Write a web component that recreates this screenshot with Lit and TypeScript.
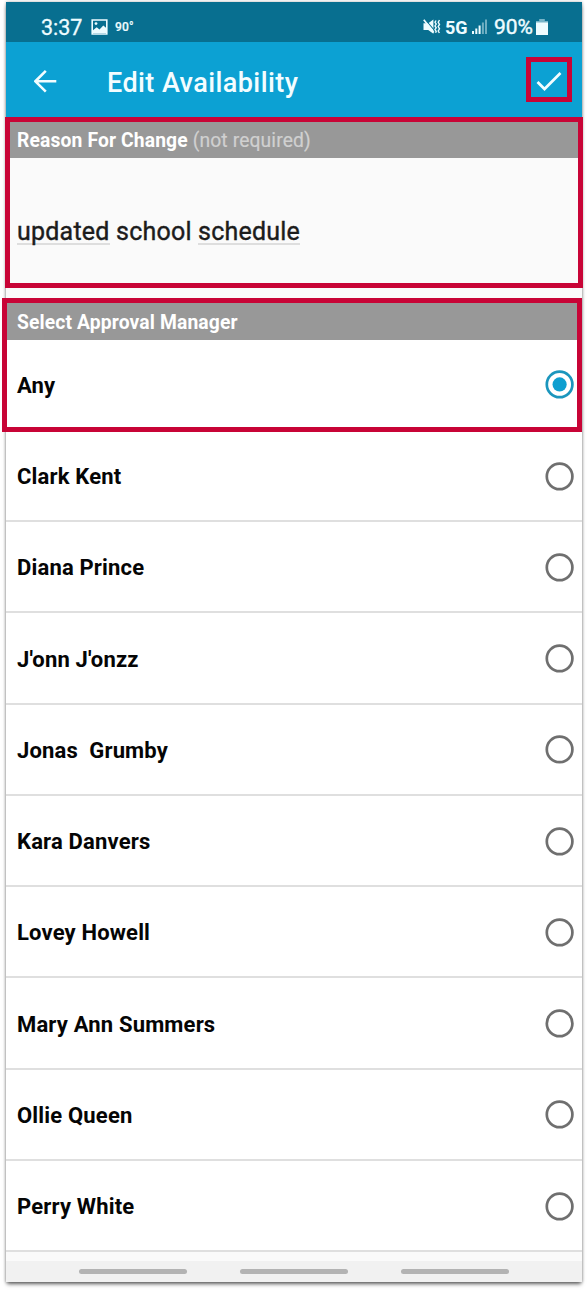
import { LitElement, html, css, svg } from "lit";
import { customElement, property } from "lit/decorators.js";

@customElement("radio-mark")
class RadioMark extends LitElement {
  @property({ type: Boolean }) checked = false;
  static styles = css`
    :host { display: block; width: 30px; height: 30px; }
    svg { display: block; }
    .ring { fill: none; stroke: #6f6f6f; stroke-width: 2.7; }
    .ring.on { stroke: #1b96bd; }
    .dot { fill: #0e9fd0; }
  `;
  render() {
    return html`<svg width="30" height="30" viewBox="0 0 30 30">
      <circle class="ring ${this.checked ? "on" : ""}" cx="14.6" cy="14.4" r="12.8"></circle>
      ${this.checked ? svg`<circle class="dot" cx="14.6" cy="14.4" r="7.1"></circle>` : null}
    </svg>`;
  }
}

@customElement("app-root")
class AppRoot extends LitElement {
  static styles = css`
    :host { display: block; width: 588px; height: 1292px; background: #fff; overflow: hidden;
      font-family: Roboto, sans-serif; box-sizing: border-box; padding: 2px 6px 0; }
    svg { display: block; flex: none; }
    .phone { position: relative; width: 576px; height: 1280px; display: flex; flex-direction: column;
      background: #fafafa; box-shadow: 0 3px 4px -1px rgba(0,0,0,.6), 0 0 3px rgba(0,0,0,.3); }
    .status { height: 40px; flex: none; box-sizing: border-box; background: #086f90; color: #eefcff;
      display: flex; align-items: center; padding: 10px 34px 0 35px; }
    .time { font-size: 21.5px; width: 50px; -webkit-text-stroke: .3px; }
    .temp { font-size: 12px; font-weight: 500; margin-left: 7px; letter-spacing: .2px; -webkit-text-stroke: .2px; }
    .spacer { flex: 1; }
    .net { font-size: 18px; font-weight: 700; margin-left: 4px; width: 27px; }
    .pct { font-size: 21px; width: 42px; margin-left: 7px; -webkit-text-stroke: .4px; }
    .bar { height: 78px; flex: none; background: #0ca1d3; color: #f3fdff; display: flex; align-items: center;
      padding: 0 19px 0 28px; box-sizing: border-box; }
    .title { font-size: 27px; font-weight: 500; margin-left: 49px; line-height: 32px; padding-top: 3px;
      letter-spacing: .42px; }
    .head { height: 38px; flex: none; background: #989898; color: #fff; font-size: 19.3px; font-weight: 700;
      display: flex; align-items: center; padding: 3px 11px 0; box-sizing: border-box; white-space: pre;
      letter-spacing: .13px; }
    .head .opt { font-weight: 400; color: #d0d0d0; -webkit-text-stroke: .2px; }
    .note { height: 143.6px; flex: none; box-sizing: border-box; padding: 59px 11px 0; color: #1c1c1c;
      font-size: 25px; line-height: 30px; white-space: pre; letter-spacing: .22px; -webkit-text-stroke: .4px; }
    .word { display: inline-block; height: 26px; border-bottom: 2.5px solid #dedede; }
    .list { flex: none; background: #fff; }
    .row { height: 91.25px; box-sizing: border-box; border-bottom: 2px solid #dfdfdf; display: flex;
      align-items: center; justify-content: space-between; padding: 2.4px 7.5px 0 11px; color: #050505;
      font-size: 22px; font-weight: 700; white-space: pre; letter-spacing: .17px; }
    .row:first-child { border-color: transparent; }
    .nav { height: 21px; margin-top: auto; background: #f1f1f1; display: flex; justify-content: center;
      align-items: center; gap: 53px; }
    .pill { width: 108px; height: 5px; border-radius: 3px; background: #b3b3b3; }
    .mark { position: absolute; box-sizing: border-box; border: 5px solid #c80436; pointer-events: none; }
    .m-check { left: 520px; top: 55px; width: 46px; height: 45px; }
    .m-reason { left: -1px; top: 115px; width: 578px; height: 171px; }
    .m-manager { left: -4px; top: 296px; width: 580px; height: 134px; }
  `;
  names = ["Any", "Clark Kent", "Diana Prince", "J'onn J'onzz", "Jonas  Grumby", "Kara Danvers",
    "Lovey Howell", "Mary Ann Summers", "Ollie Queen", "Perry White"];
  render() {
    return html`<div class="phone">
      <div class="status">
        <span class="time">3:37</span>
        <svg width="17" height="16" viewBox="0 0 17 16"><path fill="none" stroke="#eefcff" stroke-width="1.6" d="M1.2 1h14.6v14H1.2z"/><path fill="#eefcff" d="M2 11.2l3.7-3 2.8 2.2 3.8-3.8L15 8.8V14H2z"/><circle cx="5" cy="4.6" r="1.4" fill="#eefcff"/></svg>
        <span class="temp">90°</span>
        <span class="spacer"></span>
        <svg width="18" height="16" viewBox="0 0 18 16"><path fill="#eefcff" d="M.5 4.2h4.8L10.4 .6V14.8L5.2 11H.5z"/><path d="M1.8 .2L12 12" stroke="#086f90" stroke-width="1.1"/><path d="M.8 .8L10.8 13.6" stroke="#eefcff" stroke-width="1.7"/><path d="M13 1.5l-1 1.8 1.2 1.8L12 6.9l1.2 1.9L12 10.6l1.2 1.8-.6 1.4M16.5 1l-1.3 2.2 1.3 2.2-1.3 2.2 1.3 2.2-1.3 2.2 1.2 2" fill="none" stroke="#eefcff" stroke-width="1.4"/></svg>
        <span class="net">5G</span>
        <svg width="15" height="16" viewBox="0 0 15 16"><g fill="#eefcff"><path d="M0 12h2v3H0zM3.3 9.5h2V15h-2zM6.6 6.5h2V15h-2z"/><path opacity=".45" d="M9.9 3.5h2V15h-2zM13 .5h2V15h-2z"/></g></svg>
        <span class="pct">90%</span>
        <svg width="12" height="18" viewBox="0 0 12 18"><path fill="#77b4c8" d="M3.2 1h5.6v2H12v3H0V3h3.2z"/><path fill="#eefcff" d="M0 4.5h12V17H0z"/></svg>
      </div>
      <div class="bar">
        <svg width="24" height="24" viewBox="0 0 24 24"><path d="M22.3 12.3H2.6M11.8 1.9L1.4 12.3l10.4 10.4" fill="none" stroke="#f3fdff" stroke-width="2.6"/></svg>
        <span class="title">Edit Availability</span>
        <span class="spacer"></span>
        <svg width="28" height="22" viewBox="0 0 28 22"><path d="M2.5 12l7 7L25.5 3" fill="none" stroke="#f3fdff" stroke-width="2.7"/></svg>
      </div>
      <div class="head">Reason For Change <span class="opt">(not required)</span></div>
      <div class="note"><span class="word">updated</span> school <span class="word">schedule</span></div>
      <div class="head">Select Approval Manager</div>
      <div class="list">${this.names.map((n, i) => html`<div class="row"><span>${n}</span><radio-mark ?checked=${i === 0}></radio-mark></div>`)}</div>
      <div class="nav"><i class="pill"></i><i class="pill"></i><i class="pill"></i></div>
      <div class="mark m-check"></div>
      <div class="mark m-reason"></div>
      <div class="mark m-manager"></div>
    </div>`;
  }
}
